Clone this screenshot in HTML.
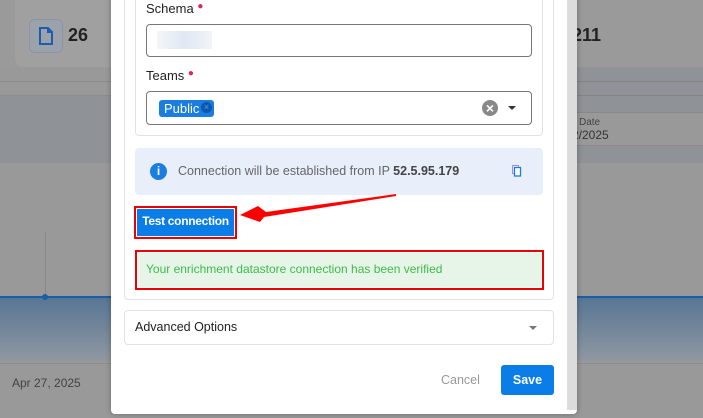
<!DOCTYPE html>
<html style="background:#999"><head><style>
*{box-sizing:border-box;margin:0;padding:0}
html,body{background:#999}
body{width:703px;height:418px;overflow:hidden;position:relative;font-family:"Liberation Sans",sans-serif}
.a{position:absolute}
</style></head><body>
<div class="a" style="left:0;top:0;width:703px;height:418px;background:#999"></div>
<div class="a" style="left:0;top:0;width:703px;height:67px;background:#9a9a9a"></div>
<div class="a" style="left:15px;top:-5px;width:120px;height:72px;background:#a0a0a0;border-radius:8px"></div>
<div class="a" style="left:29px;top:19px;width:34px;height:34px;border:1px solid #8a95a3;border-radius:6px;background:#9ba2ab"></div>
<svg class="a" style="left:38px;top:27px" width="16" height="18" viewBox="0 0 16 18"><path d="M2 1h8l4 4v12H2z M10 1v4h4" fill="none" stroke="#1a5fa8" stroke-width="2"/></svg>
<div class="a" style="left:68px;top:25px;font-size:18px;font-weight:bold;color:#222">26</div>
<div class="a" style="left:0;top:81px;width:703px;height:1px;background:#8c8c8c"></div>
<div class="a" style="left:0;top:95px;width:703px;height:1px;background:#8c8c8c"></div>
<div class="a" style="left:0;top:96px;width:703px;height:67px;background:#8f9297"></div>
<div class="a" style="left:570px;top:67px;width:133px;height:96px;background:#8f9297"></div>
<div class="a" style="left:570px;top:81px;width:133px;height:1px;background:#838383"></div>
<div class="a" style="left:570px;top:95px;width:133px;height:1px;background:#838383"></div>
<div class="a" style="left:570px;top:112px;width:133px;height:34px;background:#999;border-top:1px solid #888;border-bottom:1px solid #888"></div>
<div class="a" style="left:579px;top:117px;font-size:10px;color:#444">Date</div>
<div class="a" style="left:572px;top:128px;font-size:12px;color:#333">2/2025</div>
<div class="a" style="left:572px;top:25px;font-size:18px;font-weight:bold;color:#222">211</div>
<div class="a" style="left:45px;top:232px;width:1px;height:65px;background:#888"></div>
<div class="a" style="left:0;top:297px;width:703px;height:66px;background:linear-gradient(#577593,#8b95a0 90%,#999)"></div>
<div class="a" style="left:0;top:296px;width:703px;height:2px;background:#1a5ea8"></div>
<div class="a" style="left:42px;top:294px;width:6px;height:6px;border-radius:50%;background:#1a5ea8"></div>
<div class="a" style="left:0;top:363px;width:703px;height:1px;background:#8d8d8d"></div>
<div class="a" style="left:12px;top:376px;font-size:12px;color:#444">Apr 27, 2025</div>
<div class="a" style="left:111px;top:-10px;width:466px;height:424px;background:#fff;border-radius:4px;box-shadow:0 0 6px rgba(0,0,0,.3)"></div>
<div class="a" style="left:567px;top:0;width:10px;height:410px;background:#dcdcdc"></div>
<div class="a" style="left:124px;top:-10px;width:430px;height:310px;border:1px solid #e2e2e2;border-radius:4px"></div>
<div class="a" style="left:135px;top:-10px;width:408px;height:146px;border:1px solid #e2e2e2;border-radius:4px"></div>
<div class="a" style="left:146px;top:1px;font-size:13px;color:#222">Schema <span style="color:#e0245e;font-size:10px;vertical-align:top">●</span></div>
<div class="a" style="left:146px;top:24px;width:386px;height:33px;border:1px solid #777;border-radius:4px"></div>
<div class="a" style="left:157px;top:31px;width:55px;height:18px;background:linear-gradient(90deg,#f4f6f8,#dfe8f4,#f2f4f6)"></div>
<div class="a" style="left:146px;top:68px;font-size:13px;color:#222">Teams <span style="color:#e0245e;font-size:10px;vertical-align:top">●</span></div>
<div class="a" style="left:146px;top:91px;width:386px;height:34px;border:1px solid #777;border-radius:4px"></div>
<div class="a" style="left:159px;top:100px;width:55px;height:17px;background:#1a7de0;border-radius:3px;color:#fff;font-size:13px;padding:1px 0 0 5px">Public</div>
<div class="a" style="left:201px;top:102px;width:11px;height:11px;border-radius:50%;background:#0b58b0;color:#5d9be0;font-size:9px;line-height:11px;text-align:center">×</div>
<div class="a" style="left:482px;top:100px;width:16px;height:16px;border-radius:50%;background:#888;color:#fff;font-size:14px;line-height:16px;text-align:center;font-weight:bold">×</div>
<div class="a" style="left:508px;top:106px;border-left:4px solid transparent;border-right:4px solid transparent;border-top:4px solid #333"></div>
<div class="a" style="left:135px;top:148px;width:408px;height:47px;background:#e8eefa;border-radius:4px"></div>
<div class="a" style="left:150px;top:163px;width:17px;height:17px;border-radius:50%;background:#1a7de0;color:#fff;font-size:12px;font-weight:bold;line-height:17px;text-align:center">i</div>
<div class="a" style="left:178px;top:164px;font-size:12.5px;color:#666">Connection will be established from IP <b style="color:#444">52.5.95.179</b></div>
<svg class="a" style="left:512px;top:165px" width="10" height="12" viewBox="0 0 10 12"><rect x="0.5" y="0.5" width="6" height="8" fill="none" stroke="#9a8ef0"/><rect x="2.5" y="2.5" width="6" height="8.5" fill="#fff" stroke="#1a7de0" stroke-width="1.3"/></svg>
<div class="a" style="left:134px;top:206px;width:103px;height:33px;border:2px solid #e00;background:#fff;padding:1px"><div style="width:100%;height:100%;background:#0a7de8;color:#fff;font-size:12px;font-weight:bold;text-align:center;line-height:25px;letter-spacing:-0.3px">Test connection</div></div>
<svg class="a" style="left:236px;top:192px" width="165" height="36" viewBox="0 0 165 36"><path d="M160 2 L30 20 L22 14 L4 23 L24 30 L28 25 L160 4z" fill="#f00"/></svg>
<div class="a" style="left:135px;top:250px;width:409px;height:40px;border:2px solid #e00;background:#fff;padding:1px"><div style="width:100%;height:100%;background:#e6f5e8;color:#3fbb4a;font-size:12px;padding-left:8px;line-height:32px">Your enrichment datastore connection has been verified</div></div>
<div class="a" style="left:124px;top:310px;width:430px;height:35px;border:1px solid #e2e2e2;border-radius:4px"></div>
<div class="a" style="left:135px;top:320px;font-size:12.5px;color:#222">Advanced Options</div>
<div class="a" style="left:529px;top:326px;border-left:4px solid transparent;border-right:4px solid transparent;border-top:4px solid #777"></div>
<div class="a" style="left:441px;top:373px;font-size:12.5px;color:#999">Cancel</div>
<div class="a" style="left:501px;top:365px;width:53px;height:30px;background:#0a7de8;border-radius:3px;color:#fff;font-size:12.5px;font-weight:bold;text-align:center;line-height:30px">Save</div>
</body></html>
